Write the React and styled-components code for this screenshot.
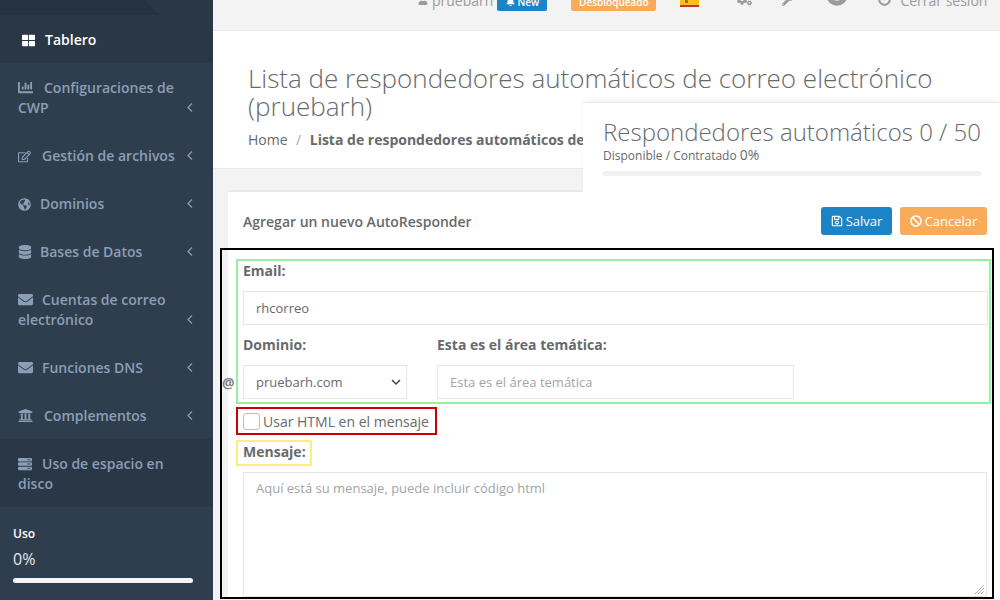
import React from "react";
import styled, { createGlobalStyle } from "styled-components";
import {
  FaThLarge,
  FaChartBar,
  FaRegEdit,
  FaGlobeAmericas,
  FaDatabase,
  FaEnvelope,
  FaUniversity,
  FaServer,
  FaRegSave,
  FaBan,
  FaBell,
  FaUser,
  FaCogs,
  FaWrench,
  FaInfoCircle,
  FaPowerOff,
} from "react-icons/fa";

const GlobalStyle = createGlobalStyle`
  html, body { margin: 0; height: 100%; overflow: hidden; }
  * { box-sizing: border-box; }
  body { font-family: "Open Sans", "Liberation Sans", sans-serif; font-size: 14px; color: #676a6c; }
`;

const Page = styled.div`
  display: flex;
  width: 1000px;
  height: 600px;
  overflow: hidden;
  background: #f3f3f4;
`;

const Sidebar = styled.aside`
  flex: none;
  width: 213px;
  background: #2f3e4e;
  display: flex;
  flex-direction: column;
`;

const Brand = styled.div`
  height: 15px;
  background: #2a3846;
  &::before {
    content: "";
    display: block;
    width: 160px;
    height: 15px;
    background: #263441;
    clip-path: polygon(0 0, 145px 0, 160px 100%, 0 100%);
  }
`;

const NavItem = styled.div`
  display: flex;
  align-items: flex-end;
  padding: 15px 20px 13px ${(p) => (p.$active ? "22px" : "18px")};
  line-height: 20px;
  font-weight: 600;
  color: ${(p) => (p.$active ? "#ffffff" : "#8b9eb6")};
  background: ${(p) => (p.$dark ? "#293746" : "transparent")};
`;

const NavLabel = styled.div`
  flex: 1;
  svg {
    vertical-align: -2px;
    margin-right: ${(p) => p.$iconGap || 9}px;
  }
`;

const Chevron = styled.svg`
  flex: none;
  width: 6px;
  height: 20px;
`;

const Usage = styled.div`
  padding: 18px 20px 0 13px;
  color: #ffffff;
`;

const UsageLabel = styled.div`
  font-size: 12px;
  font-weight: 600;
  line-height: 17px;
`;

const UsageValue = styled.div`
  font-size: 16px;
  line-height: 22px;
  margin-top: 6px;
  color: #e4e8ec;
`;

const UsageBar = styled.div`
  height: 5px;
  margin-top: 8px;
  border-radius: 3px;
  background: #f5f5f5;
`;

const Main = styled.main`
  flex: 1;
  min-width: 0;
  position: relative;
`;

const TopBar = styled.header`
  height: 31px;
  border-bottom: 1px solid #e7eaec;
  overflow: hidden;
`;

const TopRow = styled.div`
  display: flex;
  align-items: center;
  height: 22px;
  margin-top: -11px;
  padding-left: 205px;
  white-space: nowrap;
`;

const TopItem = styled.span`
  display: inline-flex;
  align-items: center;
  gap: ${(p) => p.$gap || 0}px;
  margin-left: ${(p) => p.$left || 0}px;
  color: #999c9e;
  svg {
    transform: translateY(${(p) => p.$drop || 0}px);
  }
`;

const Badge = styled.span`
  display: inline-flex;
  align-items: center;
  justify-content: center;
  gap: 3px;
  height: 22px;
  width: ${(p) => p.$width}px;
  margin-left: ${(p) => p.$left}px;
  padding-top: 3px;
  border-radius: 2px;
  font-size: 10px;
  font-weight: 600;
  color: #ffffff;
  background: ${(p) => p.$color};
`;

const TitleBlock = styled.section`
  height: 138px;
  padding: 33px 40px 0 35px;
  background: #ffffff;
  border-bottom: 1px solid #e7eaec;
`;

const PageTitle = styled.h2`
  margin: 0;
  font-size: 26px;
  font-weight: 300;
  line-height: 28px;
  color: #676a6c;
`;

const Crumbs = styled.div`
  margin-top: 10px;
  line-height: 20px;
  white-space: nowrap;
  overflow: hidden;
  strong {
    font-weight: 700;
  }
`;

const CrumbSep = styled.span`
  margin: 0 8.5px;
  color: #a5a7a8;
`;

const StatPanel = styled.div`
  position: absolute;
  top: 102px;
  right: 0;
  width: 417px;
  height: 90px;
  padding: 14px 19px 0 20px;
  background: #ffffff;
  border-top: 1px solid #e7eaec;
  box-shadow: 0 -4px 6px rgba(0, 0, 0, 0.03);
`;

const StatTitle = styled.div`
  font-size: 24px;
  font-weight: 300;
  line-height: 30px;
  white-space: nowrap;
`;

const StatNote = styled.div`
  font-size: 12px;
  line-height: 16px;
  span {
    font-size: 14px;
  }
`;

const StatBar = styled.div`
  height: 5px;
  margin-top: 7px;
  border-radius: 3px;
  background: #f1f1f1;
`;

const Card = styled.section`
  margin: 21px 0 0 15px;
  background: #ffffff;
  border-top: 2px solid #e7eaec;
`;

const CardHead = styled.div`
  display: flex;
  align-items: center;
  height: 56px;
  padding: 2px 13px 0 15px;
  gap: 8px;
`;

const CardTitle = styled.div`
  flex: 1;
  font-weight: 600;
`;

const Button = styled.button`
  display: inline-flex;
  align-items: center;
  justify-content: center;
  gap: 3px;
  height: 28px;
  width: ${(p) => p.$width}px;
  padding: 0;
  border: 0;
  border-radius: 3px;
  font-family: inherit;
  font-size: 13px;
  color: #ffffff;
  background: ${(p) => p.$color};
`;

const Frame = styled.div`
  margin-left: -8px;
  width: 774px;
  height: 351px;
  padding: 9px 0 0 14px;
  border: 2px solid #000000;
`;

const GreenBox = styled.div`
  position: relative;
  width: 755px;
  height: 145px;
  padding: 0 0 0 5px;
  border: 2px solid #96f0a2;
`;

const FieldLabel = styled.label`
  display: block;
  font-weight: 700;
  line-height: 20px;
`;

const TextInput = styled.input`
  display: block;
  width: ${(p) => p.$width};
  height: 34px;
  margin-top: ${(p) => p.$top}px;
  padding: 0 12px;
  border: 1px solid #e5e6e7;
  background: #ffffff;
  font-family: inherit;
  font-size: 13px;
  color: #676a6c;
  outline: none;
  &::placeholder {
    color: #a2a4a6;
    opacity: 1;
  }
`;

const DomainRow = styled.div`
  display: flex;
  gap: 30px;
  margin-top: 10px;
`;

const SelectBox = styled.div`
  position: relative;
  width: 164px;
  height: 34px;
  margin-top: 10px;
  padding-left: 12px;
  border: 1px solid #e5e6e7;
  font-size: 13px;
  line-height: 32px;
  svg {
    position: absolute;
    right: 5px;
    top: 9px;
  }
`;

const AtSign = styled.span`
  position: absolute;
  left: -16px;
  bottom: 10px;
  font-weight: 700;
  font-size: 14px;
  color: #7f8184;
`;

const RedBox = styled.div`
  display: flex;
  align-items: center;
  gap: 3px;
  width: 201px;
  height: 28px;
  margin-top: 3px;
  padding-left: 5px;
  border: 2px solid #cc0000;
`;

const Tick = styled.span`
  flex: none;
  width: 17px;
  height: 17px;
  border: 1px solid #bdbdbd;
  border-radius: 3px;
`;

const YellowBox = styled.div`
  width: 76px;
  height: 26px;
  margin-top: 5px;
  padding-left: 5px;
  border: 2px solid #f8ee82;
  line-height: 20px;
`;

const MessageWrap = styled.div`
  position: relative;
  width: 744px;
  height: 125px;
  margin: 6px 0 0 7px;
`;

const MessageBox = styled.textarea`
  display: block;
  width: 100%;
  height: 100%;
  padding: 6px 12px;
  border: 1px solid #e5e6e7;
  background: #ffffff;
  font-family: inherit;
  font-size: 13px;
  line-height: 18px;
  color: #676a6c;
  outline: none;
  resize: none;
  &::placeholder {
    color: #a2a4a6;
    opacity: 1;
  }
`;

const Grip = styled.svg`
  position: absolute;
  right: 2px;
  bottom: 2px;
  width: 11px;
  height: 11px;
`;

const navItems = [
  { label: "Configuraciones de CWP", icon: FaChartBar, size: 15, gap: 11 },
  { label: "Gestión de archivos", icon: FaRegEdit, size: 13, gap: 11 },
  { label: "Dominios", icon: FaGlobeAmericas, size: 13, gap: 9 },
  { label: "Bases de Datos", icon: FaDatabase, size: 14, gap: 8 },
  { label: "Cuentas de correo electrónico", icon: FaEnvelope, size: 15, gap: 9 },
  { label: "Funciones DNS", icon: FaEnvelope, size: 15, gap: 9 },
  { label: "Complementos", icon: FaUniversity, size: 15, gap: 11 },
];

function SpainFlag() {
  return (
    <svg width="19" height="14" viewBox="0 0 19 14">
      <rect width="19" height="14" fill="#c8313e" />
      <rect width="19" height="12" fill="#f6c21c" />
      <rect x="5" y="6" width="3" height="4" fill="#b5651d" />
    </svg>
  );
}

export default function App() {
  return (
    <Page>
      <GlobalStyle />
      <Sidebar>
        <Brand />
        <NavItem $active $dark>
          <NavLabel $iconGap={10}>
            <FaThLarge size={13} />
            Tablero
          </NavLabel>
        </NavItem>
        {navItems.map((item) => (
          <NavItem key={item.label}>
            <NavLabel $iconGap={item.gap}>
              <item.icon size={item.size} />
              {item.label}
            </NavLabel>
            <Chevron viewBox="0 0 6 20">
              <path d="M5 5.5L1 9.5l4 4" fill="none" stroke="currentColor" strokeWidth="1.2" />
            </Chevron>
          </NavItem>
        ))}
        <NavItem $dark>
          <NavLabel $iconGap={10}>
            <FaServer size={14} />
            Uso de espacio en disco
          </NavLabel>
        </NavItem>
        <Usage>
          <UsageLabel>Uso</UsageLabel>
          <UsageValue>0%</UsageValue>
          <UsageBar />
        </Usage>
      </Sidebar>
      <Main>
        <TopBar>
          <TopRow>
            <TopItem $gap={4}>
              <FaUser size={10} />
              pruebarh
            </TopItem>
            <Badge $width={50} $left={4} $color="#1c84c6">
              <FaBell size={9} />
              New
            </Badge>
            <Badge $width={85} $left={24} $color="#f8ac59">
              Desbloqueado
            </Badge>
            <TopItem $left={24}>
              <SpainFlag />
            </TopItem>
            <TopItem $left={38} $drop={-1}>
              <FaCogs size={15} />
            </TopItem>
            <TopItem $left={30}>
              <FaWrench size={12} />
            </TopItem>
            <TopItem $left={32} $drop={-5}>
              <FaInfoCircle size={22} />
            </TopItem>
            <TopItem $left={30} $gap={9} $drop={-1}>
              <FaPowerOff size={13} />
              Cerrar sesión
            </TopItem>
          </TopRow>
        </TopBar>
        <TitleBlock>
          <PageTitle>
            Lista de respondedores automáticos de correo electrónico (pruebarh)
          </PageTitle>
          <Crumbs>
            Home
            <CrumbSep>/</CrumbSep>
            <strong>Lista de respondedores automáticos de correo electrónico</strong>
          </Crumbs>
        </TitleBlock>
        <StatPanel>
          <StatTitle>Respondedores automáticos 0 / 50</StatTitle>
          <StatNote>
            Disponible / Contratado <span>0%</span>
          </StatNote>
          <StatBar />
        </StatPanel>
        <Card>
          <CardHead>
            <CardTitle>Agregar un nuevo AutoResponder</CardTitle>
            <Button $width={71} $color="#1c84c6">
              <FaRegSave size={12} />
              Salvar
            </Button>
            <Button $width={87} $color="#f8ac59">
              <FaBan size={12} />
              Cancelar
            </Button>
          </CardHead>
          <Frame>
            <GreenBox>
              <FieldLabel>Email:</FieldLabel>
              <TextInput $width="745px" $top={10} defaultValue="rhcorreo" />
              <DomainRow>
                <div>
                  <FieldLabel>Dominio:</FieldLabel>
                  <SelectBox>
                    pruebarh.com
                    <svg width="10" height="14" viewBox="0 0 10 14">
                      <path d="M1 5l4 4 4-4" fill="none" stroke="#444" strokeWidth="1.5" />
                    </svg>
                  </SelectBox>
                </div>
                <div>
                  <FieldLabel>Esta es el área temática:</FieldLabel>
                  <TextInput
                    $width="357px"
                    $top={10}
                    placeholder="Esta es el área temática"
                  />
                </div>
              </DomainRow>
              <AtSign>@</AtSign>
            </GreenBox>
            <RedBox>
              <Tick />
              Usar HTML en el mensaje
            </RedBox>
            <YellowBox>
              <FieldLabel>Mensaje:</FieldLabel>
            </YellowBox>
            <MessageWrap>
              <MessageBox placeholder="Aquí está su mensaje, puede incluir código html" />
              <Grip viewBox="0 0 11 11">
                <path
                  d="M1 10L10 1M4 10l6-6M7 10l3-3"
                  fill="none"
                  stroke="#8a8a8a"
                  strokeWidth="1"
                  strokeDasharray="1.2 0.6"
                />
              </Grip>
            </MessageWrap>
          </Frame>
        </Card>
      </Main>
    </Page>
  );
}
